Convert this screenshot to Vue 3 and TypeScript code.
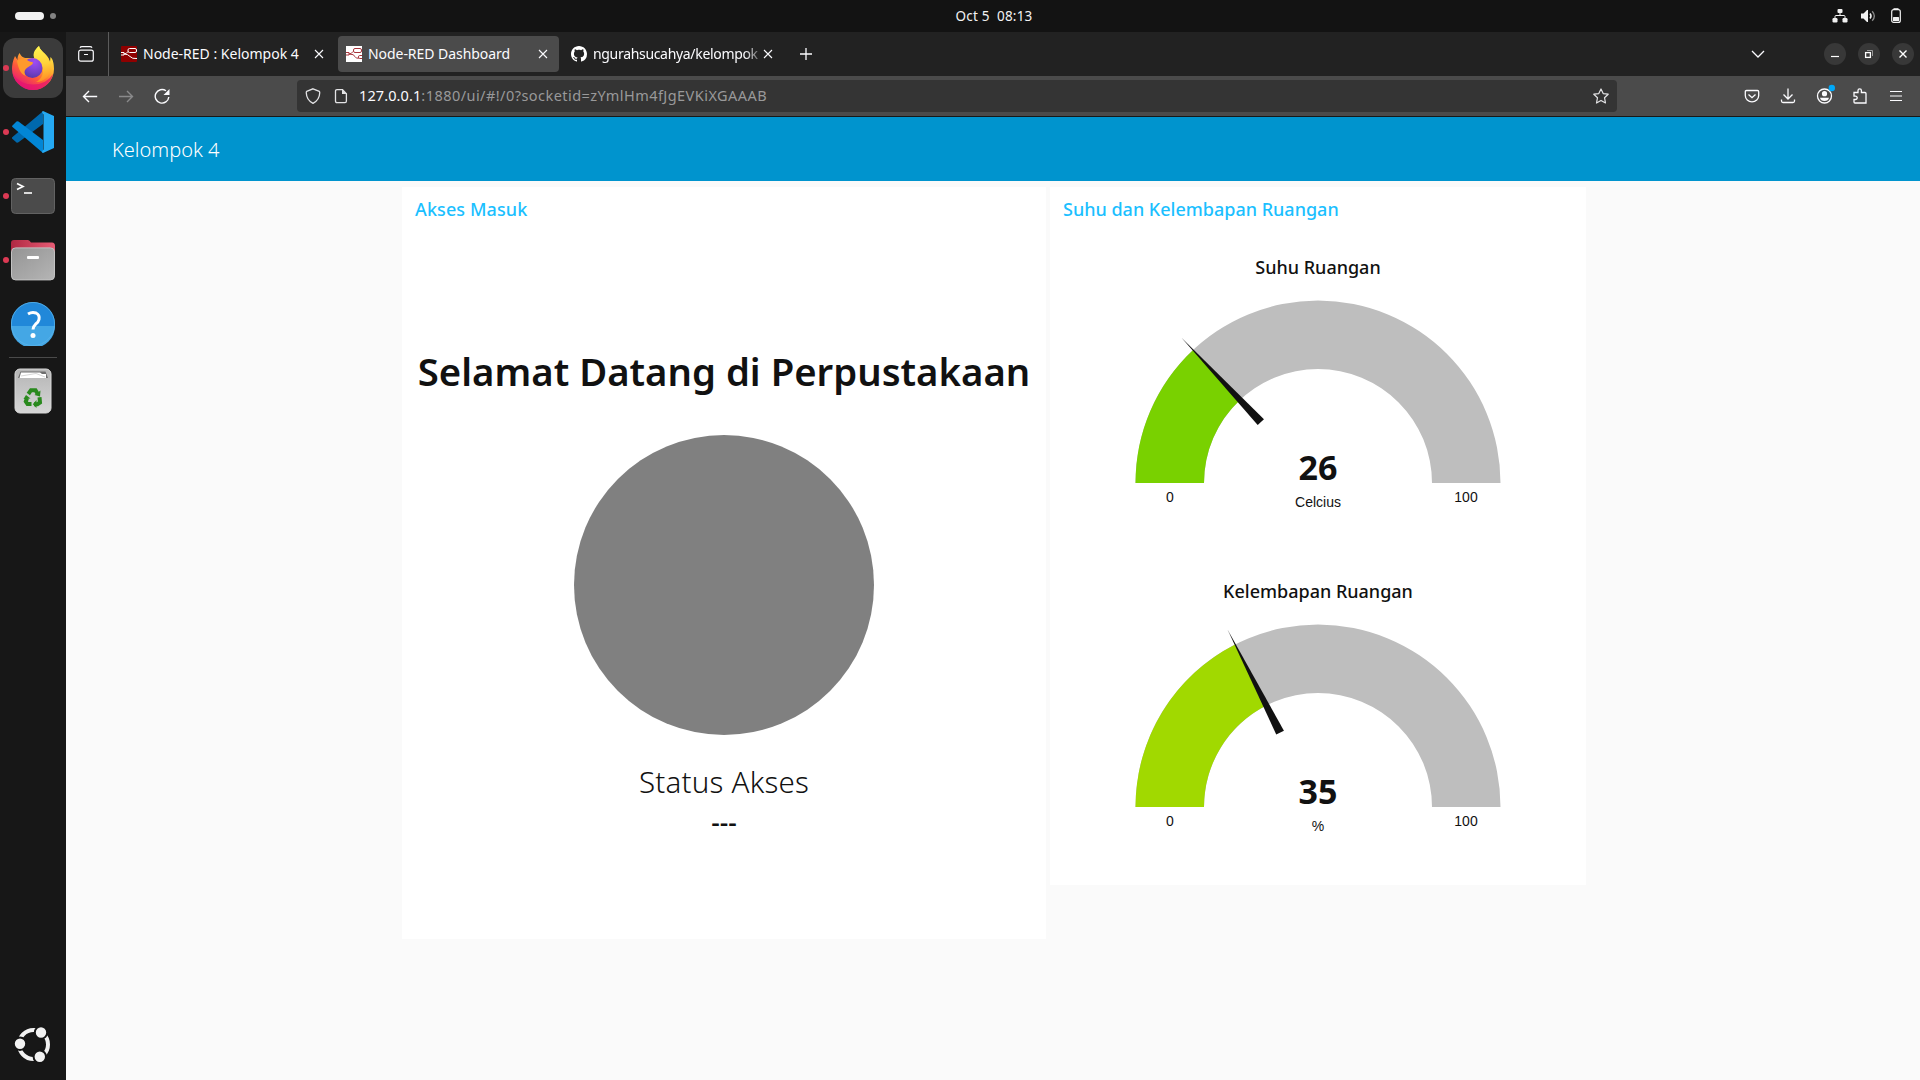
<script setup lang="ts">
interface Gauge {
  title: string
  value: number
  unit: string
  color: string
  cls: string
}

const gauges: Gauge[] = [
  { title: 'Suhu Ruangan', value: 26, unit: 'Celcius', color: '#79d100', cls: 'suhu' },
  { title: 'Kelembapan Ruangan', value: 35, unit: '%', color: '#a1d900', cls: 'kelembapan' },
]

const CX = 268
const CY = 197
const OUTER = 182.5
const INNER = 114

function point(radius: number, value: number): string {
  const a = Math.PI * (1 - value / 100)
  return `${(CX + radius * Math.cos(a)).toFixed(2)} ${(CY - radius * Math.sin(a)).toFixed(2)}`
}

function arc(from: number, to: number): string {
  return `M${point(OUTER, from)} A${OUTER} ${OUTER} 0 0 1 ${point(OUTER, to)} L${point(INNER, to)} A${INNER} ${INNER} 0 0 0 ${point(INNER, from)} Z`
}

function needle(value: number): string {
  return `rotate(${(value / 100) * 180 - 90} ${CX} ${CY})`
}
</script>

<template>
  <div class="screen">
    <header class="topbar">
      <div class="spaces"><i class="pill"></i><i class="dot"></i></div>
      <div class="clock">Oct 5&nbsp; 08:13</div>
      <div class="tray">
        <svg width="16" height="16" viewBox="0 0 16 16" fill="#f2f2f2">
          <rect x="5.5" y="1" width="5" height="4" rx="1" />
          <rect x="0.5" y="10" width="5" height="4.5" rx="1.2" />
          <rect x="10.5" y="10" width="5" height="4.5" rx="1.2" />
          <path d="M8 5v3M3 10.500V8.500Q3 7.500 4 7.500h8q1 0 1 1v2" fill="none" stroke="#f2f2f2" />
        </svg>
        <svg width="16" height="16" viewBox="0 0 16 16">
          <path d="M1 5.500h2.500L7 2h1v12H7L3.500 10.500H1z" fill="#f2f2f2" />
          <path d="M10 5.500q2 2.500 0 5" fill="none" stroke="#f2f2f2" stroke-width="1.500" />
          <path d="M12.200 3.200q4.300 4.800 0 9.600" fill="none" stroke="#8a8a8a" stroke-width="1.300" />
        </svg>
        <svg width="16" height="16" viewBox="0 0 16 16">
          <rect x="3.700" y="1.700" width="8.600" height="12.800" rx="2" fill="none" stroke="#f2f2f2" stroke-width="1.200" />
          <rect x="5.500" y="0.200" width="5" height="1.800" fill="#f2f2f2" />
          <rect x="5" y="9" width="6" height="4.200" rx=".5" fill="#f2f2f2" />
        </svg>
      </div>
    </header>

    <div class="desktop">
      <nav class="dock">
        <div class="app active">
          <i class="run"></i>
          <svg width="44" height="46" viewBox="0 0 44 46">
            <defs>
              <linearGradient id="fxBody" x1=".85" y1=".1" x2=".3" y2="1">
                <stop offset="0" stop-color="#fff04a" />
                <stop offset=".35" stop-color="#ffb02e" />
                <stop offset=".65" stop-color="#ff5a3a" />
                <stop offset="1" stop-color="#e3107f" />
              </linearGradient>
              <radialGradient id="fxGlobe" cx=".6" cy=".2" r=".9">
                <stop offset="0" stop-color="#a04cf5" />
                <stop offset=".6" stop-color="#7340c8" />
                <stop offset="1" stop-color="#5136a0" />
              </radialGradient>
              <linearGradient id="fxFlame" x1=".5" y1="0" x2=".6" y2="1">
                <stop offset="0" stop-color="#fff44f" />
                <stop offset=".5" stop-color="#ffd23a" />
                <stop offset="1" stop-color="#ff8a22" />
              </linearGradient>
            </defs>
            <path d="M28 1C24 5 22 9 23.500 13L16 13C12 13 10 11 8.500 8C7 10 6.300 13 6.500 15L4 11C1.500 16 1 21 1 24A21 21 0 0 0 43 24C43 19 42 14 39.500 12L39 17C38 12 34 9 31 6C29.500 4.500 28.500 3 28 1Z" fill="url(#fxBody)" />
            <path d="M28 1C23 5 21 10 24 14C29 17 32 21 32 26C32 31 29 35 25 37C34 37 40 30 40 22C39 13 34 9 31 6C29.500 4.500 28.500 3 28 1Z" fill="url(#fxFlame)" />
            <circle cx="21.500" cy="23" r="10" fill="url(#fxGlobe)" />
            <path d="M6 16C9 13 13 13 16 15C18 16.500 21 17 22 17.500C22 20 18 21 16 23C13 25 13 28 15 31C9 29 7 22 6 16Z" fill="#ff9a2b" />
            <path d="M2 29A20.500 20.500 0 0 0 42 29A22 18 0 0 1 2 29Z" fill="#e5146f" opacity=".75" />
          </svg>
        </div>
        <div class="app">
          <i class="run"></i>
          <svg width="42" height="42" viewBox="0 0 42 42">
            <path d="M0 27.500L4.500 31.500Q5.500 32 6.500 31.200L31 13V0.300L0.500 26Q-.3 26.700 0 27.500Z" fill="#0069ae" />
            <path d="M0.500 14.500L4.500 10.500Q5.500 9.800 6.500 10.600L31 29V42L0.500 16Q-.3 15.200 0.500 14.500Z" fill="#0286d6" />
            <path d="M31 0L42 5V37L31 42Q29 41 31.500 38.500V3.500Q29 1 31 0Z" fill="#25a9f2" />
          </svg>
        </div>
        <div class="app">
          <i class="run"></i>
          <svg width="44" height="36" viewBox="0 0 44 36">
            <rect x=".5" y=".5" width="43" height="35" rx="4" fill="#4b4b4b" stroke="#626262" />
            <path d="M6 5.500l6 3-6 3" fill="none" stroke="#fff" stroke-width="1.700" />
            <path d="M13 15h8" stroke="#fff" stroke-width="1.600" />
          </svg>
        </div>
        <div class="app">
          <i class="run"></i>
          <svg width="44" height="42" viewBox="0 0 44 42">
            <defs>
              <linearGradient id="fold" x1="0" y1="0" x2="1" y2="1"><stop offset="0" stop-color="#949494" /><stop offset="1" stop-color="#b5b5b5" /></linearGradient>
              <linearGradient id="foldBack"><stop offset="0" stop-color="#b02842" /><stop offset="1" stop-color="#e85c75" /></linearGradient>
            </defs>
            <path d="M0 16V4Q0 1 3 1H17Q18.500 1 20 3.500H41Q44 3.500 44 7V16Z" fill="url(#foldBack)" />
            <rect x=".5" y="8.900" width="43" height="32" rx="4" fill="url(#fold)" stroke="#c2c2c2" />
            <rect x="16" y="17" width="12" height="3" rx="1" fill="#fff" />
          </svg>
        </div>
        <div class="app">
          <svg width="44" height="44" viewBox="0 0 44 44">
            <circle cx="22" cy="22" r="22" fill="#2188d9" />
            <path d="M0 24A22 22 0 0 0 44 24Z" fill="#44a7e5" />
            <circle cx="22" cy="22" r="21.600" fill="none" stroke="#5bb4ea" stroke-width=".8" />
            <path d="M17 12Q21 9.500 25 11Q29 13 28 17.500Q27.500 20 24.500 22.300Q22 24.500 22 27.500" fill="none" stroke="#fff" stroke-width="3" />
            <circle cx="22" cy="33.500" r="2.500" fill="#fff" />
          </svg>
        </div>
        <div class="sep"></div>
        <div class="app">
          <svg width="38" height="46" viewBox="0 0 38 46">
            <defs><linearGradient id="bin" x2="0" y2="1"><stop offset="0" stop-color="#b5b5b5" /><stop offset="1" stop-color="#d6d6d6" /></linearGradient></defs>
            <rect x="1" y="1" width="36" height="44" rx="5" fill="url(#bin)" stroke="#d9d9d9" />
            <path d="M4 10L6.500 3.500H31.500L34 10Z" fill="#6d6d6d" />
            <path d="M5.500 10L7 4.500H26L28 6H32V10Z" fill="#fff" />
            <path d="M7 8L22 5.500 31 9" stroke="#bbb" stroke-width=".6" fill="none" />
            <g fill="none" stroke="#29891d" stroke-width="4">
              <path d="M14.300 26L17 22.200H21.500L23.500 25.500" />
              <path d="M25.500 29.300L26 34.500 23.500 36.200H20" />
              <path d="M17.500 36H13.500L11.800 33.500 13 30" />
            </g>
            <g fill="#29891d">
              <path d="M26.500 22.500L26 28.500 20.500 27Z" />
              <path d="M21.500 32V40L17.800 36.200Z" transform="translate(1 0)" />
              <path d="M9.500 31L12 27 16.500 30.500Z" />
            </g>
          </svg>
        </div>
        <div class="launcher">
          <svg width="40" height="40" viewBox="0 0 40 40">
            <circle cx="20.500" cy="20.500" r="14.500" fill="none" stroke="#f2f2f2" stroke-width="4" />
            <g fill="#f2f2f2" stroke="#161616" stroke-width="2">
              <circle cx="28" cy="8.500" r="6.200" />
              <circle cx="7" cy="19.700" r="6.200" />
              <circle cx="26.800" cy="32.700" r="6.200" />
            </g>
          </svg>
        </div>
      </nav>

      <div class="browser">
        <div class="tabs">
          <div class="view">
            <svg width="16" height="16" viewBox="0 0 16 16" fill="none" stroke="#fbfbfe" stroke-width="1.200">
              <rect x=".7" y="4.200" width="14.600" height="11" rx="2" />
              <path d="M2 1.800Q2.500.7 4 .7h8q1.500 0 2 1.100M6 8.500h4" />
            </svg>
          </div>
          <div class="tab first">
            <svg class="fav" width="16" height="16" viewBox="0 0 16 16">
              <rect width="16" height="16" rx="1" fill="#8f0000" />
              <g fill="none" stroke="#fff"><rect x="7" y="2.500" width="8.500" height="4" rx="1.500" /><path d="M0 6.500H3V9H0M3 8Q5.500 8 7 5.500M3 8Q7 8 9 10.500T16 12.500" /></g>
            </svg>
            <span class="t1">Node-RED : Kelompok 4</span>
            <svg class="x" width="10" height="10" viewBox="0 0 10 10"><path d="M1 1l8 8M9 1l-8 8" stroke="#fbfbfe" stroke-width="1.100" /></svg>
          </div>
          <div class="tab on">
            <svg class="fav" width="16" height="16" viewBox="0 0 16 16">
              <rect width="16" height="16" fill="#fff" />
              <g fill="none" stroke="#a8343b"><rect x="7.500" y="2.500" width="8" height="4" rx="1.500" /><path d="M0 6.500H3V9H0M3 8Q5.500 8 7 5.500M3 8Q8 8 9 10.500T13 12" /><path d="M16 9.500H13.500Q12.500 9.500 12.500 11T13.500 12.500H16" /></g>
            </svg>
            <span class="t2">Node-RED Dashboard</span>
            <svg class="x" width="10" height="10" viewBox="0 0 10 10"><path d="M1 1l8 8M9 1l-8 8" stroke="#fbfbfe" stroke-width="1.100" /></svg>
          </div>
          <div class="tab last">
            <svg class="fav" width="16" height="16" viewBox="0 0 16 16">
              <path fill="#fff" d="M8 0C3.580 0 0 3.580 0 8c0 3.540 2.290 6.530 5.470 7.590.4.070.55-.17.55-.38 0-.19-.01-.82-.01-1.490-2.010.37-2.530-.49-2.690-.94-.09-.23-.48-.94-.82-1.130-.28-.15-.68-.52-.01-.53.63-.01 1.080.58 1.230.82.72 1.210 1.870.87 2.330.66.070-.52.28-.87.51-1.070-1.780-.2-3.640-.89-3.640-3.950 0-.87.31-1.590.82-2.150-.08-.2-.36-1.020.08-2.120 0 0 .67-.21 2.200.82.64-.18 1.320-.27 2-.27s1.360.09 2 .27c1.530-1.040 2.200-.82 2.200-.82.44 1.100.16 1.920.08 2.120.51.56.82 1.270.82 2.150 0 3.070-1.870 3.750-3.650 3.950.29.25.54.73.54 1.480 0 1.070-.01 1.930-.01 2.200 0 .21.15.46.55.38A8.010 8.010 0 0 0 16 8c0-4.420-3.580-8-8-8z" />
            </svg>
            <span class="t3">ngurahsucahya/kelompok</span>
            <svg class="x" width="10" height="10" viewBox="0 0 10 10"><path d="M1 1l8 8M9 1l-8 8" stroke="#fbfbfe" stroke-width="1.100" /></svg>
          </div>
          <svg class="plus" width="12" height="12" viewBox="0 0 12 12"><path d="M6 0v12M0 6h12" stroke="#fbfbfe" stroke-width="1.300" /></svg>
          <svg class="chev" width="14" height="8" viewBox="0 0 14 8"><path d="M1 1l6 6 6-6" fill="none" stroke="#fbfbfe" stroke-width="1.300" /></svg>
          <div class="winbtns">
            <i><svg width="10" height="10" viewBox="0 0 10 10"><path d="M1 7.500h8" stroke="#fff" stroke-width="1.200" /></svg></i>
            <i><svg width="10" height="10" viewBox="0 0 10 10" fill="none"><path d="M3 1.500h5.500v5.500" stroke="#9a9a9a" /><rect x="1.600" y="3.600" width="4.800" height="4.800" stroke="#fff" stroke-width="1.300" /></svg></i>
            <i><svg width="10" height="10" viewBox="0 0 10 10"><path d="M1.500 1.500l7 7M8.500 1.500l-7 7" stroke="#fff" stroke-width="1.400" /></svg></i>
          </div>
        </div>

        <div class="toolbar">
          <div class="navs">
            <svg width="16" height="16" viewBox="0 0 16 16" fill="none" stroke="#fbfbfe" stroke-width="1.400"><path d="M15.200 8.500H1.500M7 3L1.500 8.500 7 14" /></svg>
            <svg width="16" height="16" viewBox="0 0 16 16" fill="none" stroke="#8a8a8b" stroke-width="1.400"><path d="M1 8.500H14.700M9 3l5.500 5.500L9 14" /></svg>
            <svg width="16" height="16" viewBox="0 0 16 16"><path d="M14.800 9A6.800 6.800 0 1 1 12 2.800" fill="none" stroke="#fbfbfe" stroke-width="1.400" /><path d="M15.500 1v6H9.500z" fill="#fbfbfe" /></svg>
          </div>
          <div class="urlbar">
            <svg width="16" height="16" viewBox="0 0 16 16" fill="none" stroke="#e3e3e5" stroke-width="1.300"><path d="M8 .8L14.300 3.300Q14.800 3.600 14.700 5Q14.500 12 8 15.300Q1.500 12 1.300 5Q1.200 3.600 1.700 3.300Z" /></svg>
            <svg width="14" height="16" viewBox="0 0 14 16"><path d="M3 1.700H8.500L12.400 5.700V13Q12.400 14.600 11 14.600H3Q1.500 14.600 1.500 13V3.200Q1.500 1.700 3 1.700Z" fill="none" stroke="#e3e3e5" stroke-width="1.300" /><path d="M8 1.500V6H12.500Z" fill="#e3e3e5" /></svg>
            <div class="url"><b>127.0.0.1</b>:1880/ui/#!/0?socketid=zYmlHm4fJgEVKiXGAAAB</div>
            <svg class="star" width="16" height="16" viewBox="0 0 16 16"><path d="M8 1L10.200 5.600 15.200 6.200 11.500 9.700 12.500 15 8 12.400 3.500 15 4.500 9.700.8 6.200 5.800 5.600Z" fill="none" stroke="#e3e3e5" stroke-width="1.200" stroke-linejoin="round" /></svg>
          </div>
          <div class="tools">
            <svg width="16" height="16" viewBox="0 0 16 16" fill="none" stroke="#fbfbfe" stroke-width="1.300"><path d="M2.500 2.500h11q1.200 0 1.200 1.200V7.500a6.700 6.400 0 0 1-13.400 0V3.700q0-1.200 1.200-1.200zM4.500 6.500L8 9.700l3.500-3.200" /></svg>
            <svg width="16" height="16" viewBox="0 0 16 16" fill="none" stroke="#fbfbfe" stroke-width="1.300"><path d="M8 .5v10M3.500 6.500L8 11l4.500-4.500M1.500 11.500v1.500q0 1.500 1.500 1.500h10q1.500 0 1.500-1.500v-1.500" /></svg>
            <svg width="20" height="20" viewBox="0 0 20 20"><circle cx="9.500" cy="12" r="7" fill="none" stroke="#fbfbfe" stroke-width="1.300" /><circle cx="9.500" cy="9.700" r="2.600" fill="#fbfbfe" /><path d="M5 13.700h9q-.8 3.300-4.500 3.300T5 13.700z" fill="#fbfbfe" /><circle cx="16.800" cy="4" r="3.200" fill="#00a8f8" /></svg>
            <svg width="16" height="16" viewBox="0 0 16 16" fill="none" stroke="#fbfbfe" stroke-width="1.300"><path d="M2 4.500h4V2.500a1.700 1.700 0 0 1 3.400 0V4.500H13q1 0 1 1V15H3q-1 0-1-1V11.500h1.500a1.600 1.600 0 0 0 0-3.400H2z" /></svg>
            <svg width="16" height="16" viewBox="0 0 16 16" stroke="#fbfbfe" stroke-width="1.200"><path d="M2 3.500h12M2 8h12M2 12.500h12" /></svg>
          </div>
        </div>

        <div class="page-head"><span>Kelompok 4</span></div>
        <main class="page">
          <section class="card access">
            <h2 class="akses">Akses Masuk</h2>
            <h1>Selamat Datang di Perpustakaan</h1>
            <div class="lamp"></div>
            <p class="status">Status Akses</p>
            <p class="result">---</p>
          </section>
          <section class="card climate">
            <h2 class="iklim">Suhu dan Kelembapan Ruangan</h2>
            <div v-for="g in gauges" :key="g.cls" class="gauge">
              <h3 :class="g.cls">{{ g.title }}</h3>
              <svg width="536" height="240" viewBox="0 0 536 240">
                <path :d="arc(0, 100)" fill="#bebebe" />
                <path :d="arc(0, g.value)" :fill="g.color" />
                <path d="M263.700 113.500L268 -2L272.300 113.500Z" fill="#111" :transform="needle(g.value)" />
                <text class="num" x="268" y="194">{{ g.value }}</text>
                <text class="small" x="268" y="221">{{ g.unit }}</text>
                <text class="small" x="120" y="216">0</text>
                <text class="small" x="416" y="216">100</text>
              </svg>
            </div>
          </section>
        </main>
      </div>
    </div>
  </div>
</template>

<style>
body {
  margin: 0;
  overflow: hidden;
}
</style>

<style scoped>
.screen {
  width: 1920px;
  height: 1080px;
  display: flex;
  flex-direction: column;
  overflow: hidden;
  font-family: "Noto Sans", "Open Sans", sans-serif;
  background: #131313;
}
svg {
  display: block;
  flex: none;
}
h1, h2, h3, p {
  margin: 0;
  white-space: nowrap;
}
.topbar {
  height: 32px;
  flex: none;
  display: grid;
  grid-template-columns: 1fr auto 1fr;
  align-items: center;
  background: #131313;
}
.spaces {
  display: flex;
  align-items: center;
  gap: 6px;
  padding-left: 15px;
}
.pill {
  width: 29px;
  height: 8px;
  border-radius: 4px;
  background: #f2f2f2;
}
.dot {
  width: 6px;
  height: 6px;
  border-radius: 50%;
  background: #828282;
}
.clock {
  font-size: 13.5px;
  line-height: 30px;
  letter-spacing: 0.2px;
  color: #f2f2f2;
  margin-left: 68px;
}
.tray {
  display: flex;
  justify-content: flex-end;
  gap: 12px;
  padding-right: 16px;
}
.desktop {
  display: flex;
  flex: 1;
  min-height: 0;
}
.dock {
  width: 66px;
  flex: none;
  display: flex;
  flex-direction: column;
  align-items: center;
  padding-top: 6px;
  box-sizing: border-box;
  background: #171717;
}
.app {
  position: relative;
  width: 60px;
  height: 60px;
  margin-bottom: 4px;
  border-radius: 12px;
  display: flex;
  align-items: center;
  justify-content: center;
}
.app.active {
  background: #3b3b3b;
}
.run {
  position: absolute;
  left: 0;
  top: 27px;
  width: 6px;
  height: 6px;
  border-radius: 50%;
  background: #dc3a54;
}
.sep {
  width: 48px;
  height: 1px;
  margin: -1px 0 3px;
  background: #4a4a4a;
}
.launcher {
  margin-top: auto;
  margin-bottom: 16px;
}
.browser {
  flex: 1;
  min-width: 0;
  display: flex;
  flex-direction: column;
}
.tabs {
  height: 44px;
  flex: none;
  display: flex;
  align-items: center;
  background: #222;
  color: #fbfbfe;
  font-size: 14px;
}
.view {
  width: 43px;
  height: 44px;
  border-right: 1px solid #5c5c5c;
  display: flex;
  align-items: center;
  padding-left: 12px;
  box-sizing: border-box;
}
.tab {
  height: 36px;
  display: flex;
  align-items: center;
  box-sizing: border-box;
  border-radius: 4px;
}
.tab span {
  white-space: nowrap;
  margin-left: 6px;
  line-height: 30px;
}
.tab .x {
  margin-left: auto;
}
.first {
  width: 221px;
  margin-left: 4px;
  padding: 0 10px 0 8px;
}
.on {
  width: 221px;
  margin-left: 4px;
  padding: 0 11px 0 8px;
  background: #4b4b4b;
}
.last {
  width: 221px;
  margin-left: 4px;
  padding: 0 11px 0 8px;
}
.t1 { letter-spacing: 0; }
.t2 { letter-spacing: -0.05px; }
.t3 {
  width: 168px;
  letter-spacing: -0.32px;
  mask-image: linear-gradient(to right, #000 152px, rgba(0, 0, 0, 0.2) 168px);
}
.plus {
  margin-left: 16px;
}
.chev {
  margin-left: auto;
  margin-right: 59px;
}
.winbtns {
  display: flex;
  gap: 12px;
  padding-right: 6px;
}
.winbtns i {
  width: 22px;
  height: 22px;
  border-radius: 50%;
  background: #383838;
  display: flex;
  align-items: center;
  justify-content: center;
}
.toolbar {
  height: 40px;
  flex: none;
  display: flex;
  align-items: center;
  background: #4b4b4b;
  border-bottom: 1px solid #181818;
}
.navs {
  width: 231px;
  display: flex;
  gap: 20px;
  padding-left: 16px;
  box-sizing: border-box;
}
.urlbar {
  width: 1320px;
  height: 32px;
  border-radius: 4px;
  background: #343434;
  display: flex;
  align-items: center;
  padding: 0 8px;
  box-sizing: border-box;
}
.urlbar svg + svg {
  margin-left: 13px;
}
.url {
  margin-left: 11px;
  padding-bottom: 2px;
  font-size: 14.5px;
  line-height: 30px;
  letter-spacing: 0.45px;
  color: #99999a;
}
.url b {
  font-weight: 400;
  letter-spacing: 0.1px;
  color: #fbfbfe;
}
.star {
  margin-left: auto;
}
.tools {
  display: flex;
  align-items: center;
  gap: 20px;
  margin-left: auto;
  padding-right: 16px;
}
.tools svg:nth-child(3) {
  margin: -4px -3px 0 -1px;
}
.page-head {
  height: 64px;
  flex: none;
  background: #0094ce;
  display: flex;
  align-items: center;
  padding-left: 46px;
  color: #fff;
  font-size: 20px;
  font-weight: 300;
}
.page {
  flex: 1;
  background: #fafafa;
  display: flex;
  align-items: flex-start;
  gap: 4px;
  padding: 6px 0 0 336px;
}
.card {
  background: #fff;
  box-sizing: border-box;
}
.access {
  width: 644px;
  height: 752px;
  display: flex;
  flex-direction: column;
  align-items: center;
}
.climate {
  width: 536px;
  height: 698px;
}
h2 {
  align-self: flex-start;
  margin-left: 13px;
  height: 44px;
  line-height: 44px;
  font-size: 18px;
  font-weight: 500;
  color: #1bbfff;
}
.akses {
  letter-spacing: 0.1px;
}
h1 {
  margin-top: 110px;
  height: 60px;
  line-height: 60px;
  font-size: 38.3px;
  font-weight: 600;
  color: #111;
}
.lamp {
  margin-top: 34px;
  width: 300px;
  height: 300px;
  border-radius: 50%;
  background: #808080;
}
.status {
  margin-top: 27px;
  height: 40px;
  line-height: 40px;
  font-size: 29.5px;
  letter-spacing: 0.2px;
  font-weight: 300;
  color: #111;
}
.result {
  height: 40px;
  line-height: 40px;
  font-size: 26.5px;
  font-weight: 500;
  color: #111;
}
.gauge {
  height: 324px;
}
h3 {
  height: 55px;
  line-height: 72px;
  text-align: center;
  font-size: 18px;
  font-weight: 500;
  color: #111;
}
.num {
  font-family: "Noto Sans", sans-serif;
  font-size: 34px;
  font-weight: 700;
  text-anchor: middle;
  fill: #111;
}
.small {
  font-family: "Liberation Sans", Arial, sans-serif;
  font-size: 14px;
  text-anchor: middle;
  fill: #111;
}
</style>
